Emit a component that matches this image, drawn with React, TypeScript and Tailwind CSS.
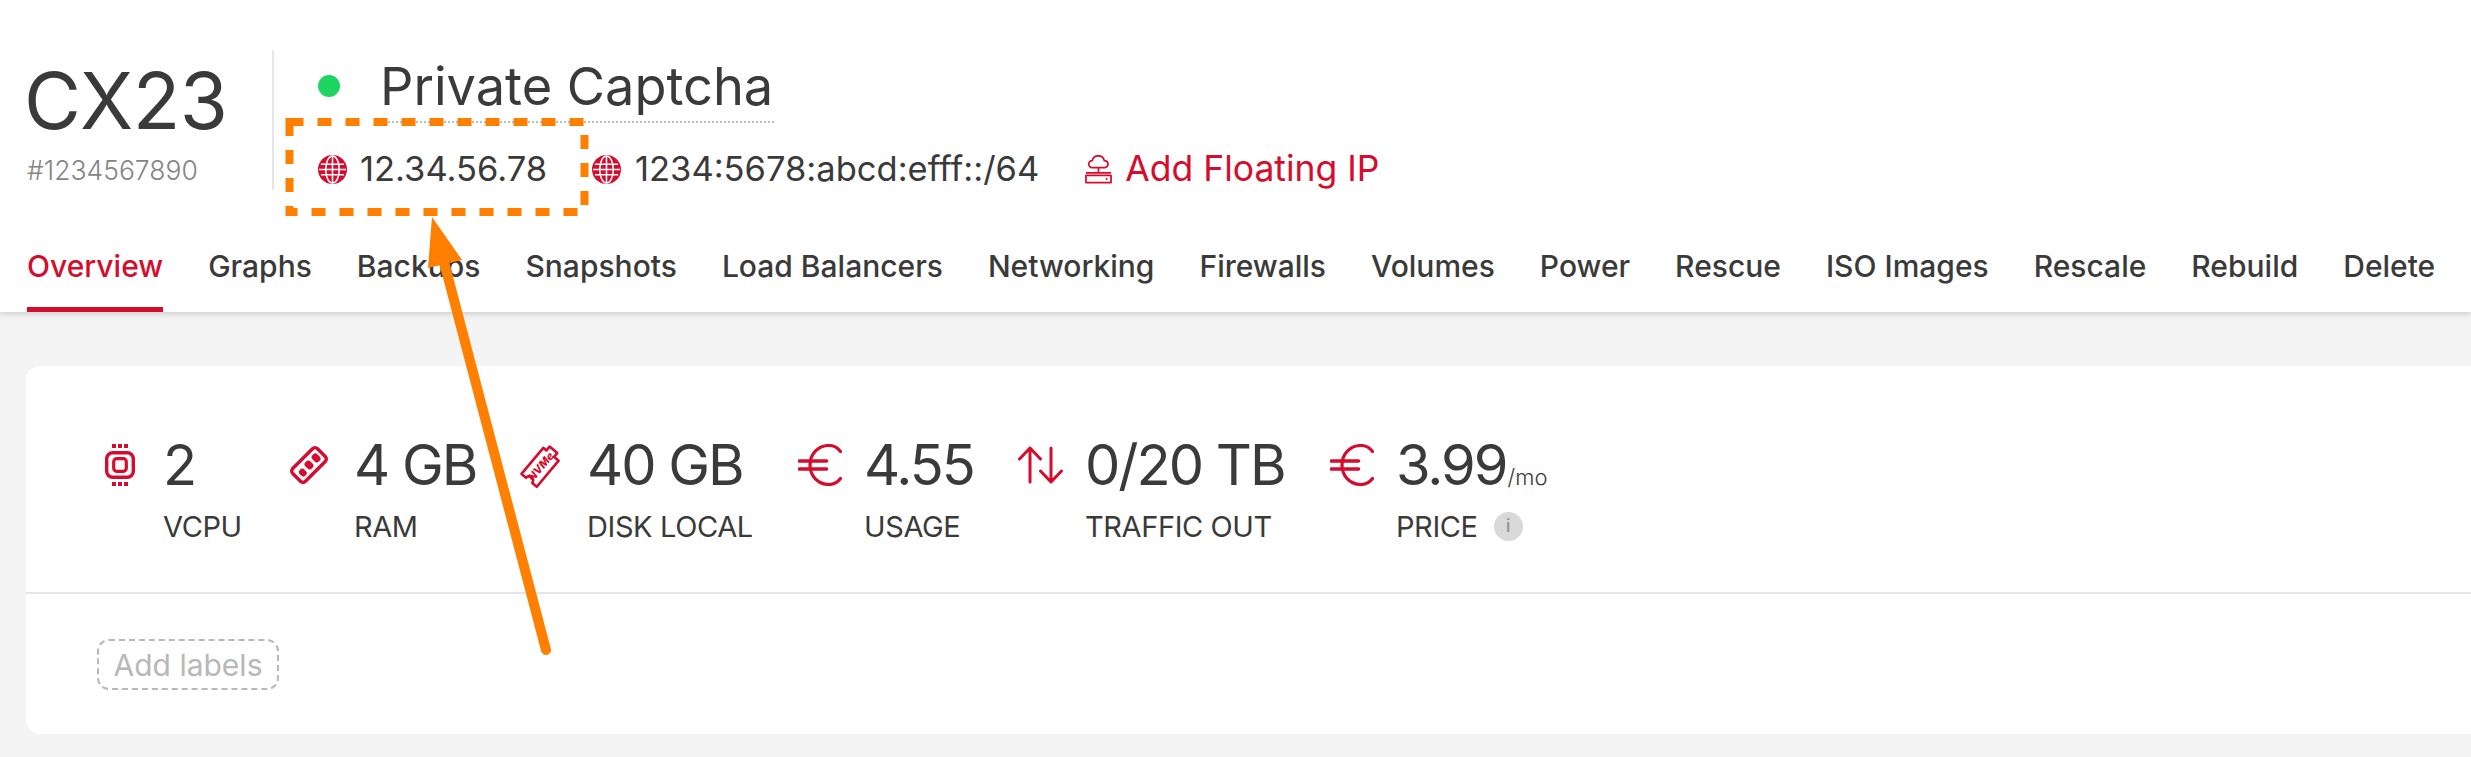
import React from "react";

const RED = "#d50c2d";

function Globe({ className = "" }: { className?: string }) {
  return (
    <svg viewBox="0 0 30 30" className={className} fill="none">
      <circle cx="15" cy="15" r="15" fill={RED} />
      <g stroke="#fff" strokeWidth="1.600">
        <ellipse cx="15" cy="15" rx="7" ry="14" />
        <path d="M15 1v28" />
        <path d="M3 9.500h24M1 15h28M3 20.500h24" />
      </g>
    </svg>
  );
}

function FloatingIcon({ className = "" }: { className?: string }) {
  return (
    <svg viewBox="0 0 28 29" className={className} fill="none" stroke={RED} strokeWidth="1.800" strokeLinejoin="round">
      <path d="M7.500 12.500a3.600 3.600 0 0 1 0-7.200A6.400 6.400 0 0 1 20 5.300a3.600 3.600 0 0 1 .5 7.200Z" />
      <path d="M14 12.500v5.500M1 18h26" />
      <rect x="1" y="20.500" width="26" height="7.500" />
      <circle cx="22.500" cy="24.300" r="1" fill={RED} stroke="none" />
    </svg>
  );
}

function CpuIcon() {
  return (
    <svg viewBox="0 0 30 42" className="w-[30px] h-[42px]" fill="none">
      <rect x="1.700" y="8.700" width="26.600" height="24.600" rx="6" stroke={RED} strokeWidth="3.400" />
      <rect x="8.700" y="14.700" width="12.600" height="12.600" rx="3" stroke={RED} strokeWidth="3.200" />
      <path d="M7 0h4v4H7zM13 0h4v4h-4zM19 0h4v4h-4zM7 38h4v4H7zM13 38h4v4h-4zM19 38h4v4h-4z" fill={RED} />
    </svg>
  );
}

function RamIcon() {
  return (
    <svg viewBox="0 0 42 42" className="w-[42px] h-[42px]" fill="none">
      <g transform="translate(21 21) rotate(-45)">
        <rect x="-17.500" y="-9" width="35" height="18" rx="3.500" stroke={RED} strokeWidth="3.400" />
        <rect x="-13" y="-3" width="6.500" height="8" rx="3" fill={RED} />
        <rect x="-3.500" y="-4.500" width="7" height="9" rx="3" fill={RED} />
        <rect x="6.500" y="-4.500" width="7" height="9" rx="3" fill={RED} />
      </g>
    </svg>
  );
}

function NvmeIcon() {
  return (
    <svg viewBox="0 0 42 42" className="w-[42px] h-[42px] overflow-visible" fill="none">
      <g transform="translate(21 21) rotate(-50)">
        <path d="M-20 -10 H14 V-6 H19 V4 H14 V10 H-20 V4 A4 4 0 0 0 -20 -4 Z" stroke={RED} strokeWidth="2.600" strokeLinejoin="round" />
        <text x="-2" y="4" textAnchor="middle" fontSize="11" fontWeight="800" fontStyle="italic" fill={RED} fontFamily="Inter, sans-serif">NVMe</text>
      </g>
    </svg>
  );
}

function EuroIcon() {
  return (
    <svg viewBox="0 0 44 42" className="w-[44px] h-[42px]" fill="none" stroke={RED}>
      <path d="M42.500 7.500C39.500 3.500 35.500 1.500 31 1.500C20 1.500 12 10 12 21s8 19.500 19 19.500c4.500 0 8.500-2 11.500-6" strokeWidth="3.200" strokeLinecap="round" />
      <path d="M1.500 17h27M1.500 25h27" strokeWidth="3.600" strokeLinecap="round" />
    </svg>
  );
}

function ArrowsIcon() {
  return (
    <svg viewBox="0 0 45 38" className="w-[45px] h-[38px]" fill="none" stroke={RED} strokeWidth="3" strokeLinecap="round" strokeLinejoin="round">
      <path d="M12 36V2M1.500 13 12 2l10.500 11" />
      <path d="M33 2v34M22.500 25 33 36l10.500-11" />
    </svg>
  );
}

function Stat({
  icon,
  value,
  label,
  suffix,
  info,
  colClass,
}: {
  icon: React.ReactNode;
  value: string;
  label: string;
  suffix?: string;
  info?: boolean;
  colClass: string;
}) {
  return (
    <div className="flex items-start">
      <div className="flex items-center justify-center h-[42px] mt-[3px]">{icon}</div>
      <div className={`flex flex-col ${colClass}`}>
        <div className="flex items-baseline text-[#3a3a3a] text-[56px] leading-[48px] font-[380] tracking-[-2px] whitespace-nowrap">
          <span>{value}</span>
          {suffix && <span className="text-[22px] leading-none ml-[1px] tracking-normal font-light">{suffix}</span>}
        </div>
        <div className="flex items-center mt-[23px] h-[29px]">
          <span className="text-[#3a3a3a] text-[29px] leading-none font-normal tracking-[-0.4px] whitespace-nowrap">{label}</span>
          {info && (
            <span className="ml-[16px] w-[29px] h-[29px] rounded-full bg-[#d9d9d9] text-[#8f8f8f] text-[17px] font-medium flex items-center justify-center">
              i
            </span>
          )}
        </div>
      </div>
    </div>
  );
}

const TABS = [
  "Overview",
  "Graphs",
  "Backups",
  "Snapshots",
  "Load Balancers",
  "Networking",
  "Firewalls",
  "Volumes",
  "Power",
  "Rescue",
  "ISO Images",
  "Rescale",
  "Rebuild",
  "Delete",
];

export default function App() {
  return (
    <div className="relative w-full h-[757px] overflow-hidden bg-[#f4f4f4] font-['Inter',sans-serif]">
      <header className="relative bg-white h-[312px] shadow-[0_2px_6px_rgba(0,0,0,0.16)] flex flex-col justify-between">
        <div className="flex pt-[50px] pl-[27px]">
          <div className="w-[245px] flex flex-col">
            <div className="text-[78px] leading-[78px] mt-[12px] ml-[-3px] font-[380] text-[#3a3a3a] tracking-[-0.5px]">CX23</div>
            <div className="text-[26.500px] leading-[28px] mt-[16px] font-light text-[#858585]">#1234567890</div>
          </div>
          <div className="w-[2px] h-[140px] bg-[#e6e6e6]" />
          <div className="flex flex-col pl-[44px]">
            <div className="flex items-center h-[73px]">
              <span className="w-[22px] h-[22px] rounded-full bg-[#1fd561] mt-[-2px]" />
              <div className="ml-[40px] text-[52.300px] leading-[72px] h-[73px] text-[#3a3a3a] border-b-2 border-dotted border-[#bdbdbd] pr-[1px]">
                Private Captcha
              </div>
            </div>
            <div className="flex items-center mt-[26px] text-[34.500px] leading-[40px] whitespace-nowrap">
              <Globe className="w-[29px] h-[29px]" />
              <span className="ml-[13px] text-[#3a3a3a]">12.34.56.78</span>
              <Globe className="ml-[45px] w-[29px] h-[29px]" />
              <span className="ml-[14px] text-[#3a3a3a]">1234:5678:abcd:efff::/64</span>
              <FloatingIcon className="ml-[46px] w-[27px] h-[29px]" />
              <span className="ml-[13px] text-[#d50c2d] text-[35.500px]">Add Floating IP</span>
            </div>
          </div>
        </div>
        <nav className="flex pl-[27px] gap-[45px]">
          {TABS.map((t, i) => (
            <div
              key={t}
              className={`h-[72px] pt-[8px] text-[30px] leading-[36px] font-medium whitespace-nowrap ${
                i === 0 ? "text-[#d50c2d] border-b-[5px] border-[#d50c2d]" : "text-[#3a3a3a]"
              }`}
            >
              {t}
            </div>
          ))}
        </nav>
      </header>

      <main className="ml-[26px] mt-[54px] h-[368px] bg-white rounded-l-[14px] flex flex-col">
        <div className="h-[228px] border-b-2 border-[#e6e6e6] pl-[79px] pt-[75px] flex gap-[45px]">
          <Stat icon={<CpuIcon />} value="2" label="VCPU" colClass="ml-[28px] w-[80px]" />
          <Stat icon={<RamIcon />} value="4 GB" label="RAM" colClass="ml-[24px] w-[122px]" />
          <Stat icon={<NvmeIcon />} value="40 GB" label="DISK LOCAL" colClass="ml-[24px] w-[166px]" />
          <Stat icon={<EuroIcon />} value="4.55" label="USAGE" colClass="ml-[22px] w-[109px]" />
          <Stat icon={<ArrowsIcon />} value="0/20 TB" label="TRAFFIC OUT" colClass="ml-[22px] w-[200px]" />
          <Stat icon={<EuroIcon />} value="3.99" label="PRICE" suffix="/mo" info colClass="ml-[22px] w-[150px]" />
        </div>
        <div className="pl-[71px] pt-[45px]">
          <div className="w-[182px] h-[51px] rounded-[12px] border-2 border-dashed border-[#b8b8b8] text-[#b8b8b8] text-[30px] leading-[49px] text-center">
            Add labels
          </div>
        </div>
      </main>

      <svg className="absolute left-0 top-0 w-[2471px] h-[757px] pointer-events-none" viewBox="0 0 2471 757" fill="none">
        <rect x="289.500" y="122" width="295" height="90" stroke="#ff7f00" strokeWidth="8" strokeDasharray="14 14" />
        <path d="M444 262 546 650" stroke="#ff7f00" strokeWidth="10" strokeLinecap="round" />
        <path d="M432 217 428 268 462 260Z" fill="#ff7f00" />
      </svg>
    </div>
  );
}
